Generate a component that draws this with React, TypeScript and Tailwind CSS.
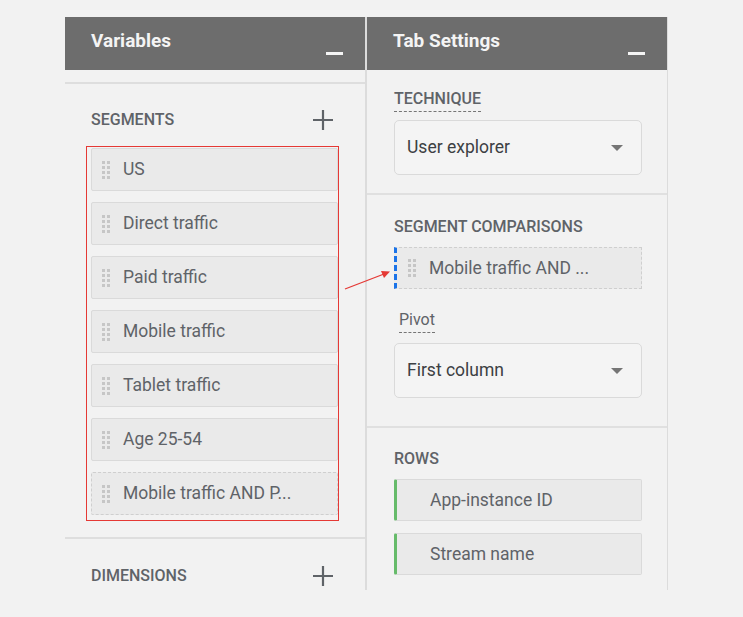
const FONT = { fontFamily: 'Roboto, "Noto Sans", Arial, sans-serif' }

const SEGMENTS = [
  'US',
  'Direct traffic',
  'Paid traffic',
  'Mobile traffic',
  'Tablet traffic',
  'Age 25-54',
]

function DragHandle() {
  return (
    <div className="grid grid-cols-2 gap-x-[2px] gap-y-[2px] w-[8px] shrink-0">
      {Array.from({ length: 8 }).map((_, i) => (
        <span key={i} className="block w-[3px] h-[3px] bg-[#c6c6c6]" />
      ))}
    </div>
  )
}

function PlusIcon() {
  return (
    <svg width="20" height="20" viewBox="0 0 20 20" className="shrink-0">
      <path d="M10 0v20M0 10h20" stroke="#5f6368" strokeWidth="2.2" fill="none" />
    </svg>
  )
}

function PanelHeader({ title }: { title: string }) {
  return (
    <div className="h-[53px] bg-[#6d6d6d] flex items-start justify-between pl-[26px] pr-[22px]">
      <span className="text-[19px] font-bold leading-[24px] text-[#f4f4f4] mt-[12px]">{title}</span>
      <span className="block w-[17px] h-[3px] bg-[#f4f4f4] mt-[35px]" />
    </div>
  )
}

function SectionRow({ label }: { label: string }) {
  return (
    <div className="h-[36px] flex items-center justify-between pl-[26px] pr-[32px]">
      <span className="text-[16px] font-medium text-[#5f6368] uppercase">{label}</span>
      <PlusIcon />
    </div>
  )
}

function Select({ value }: { value: string }) {
  return (
    <div className="h-[55px] w-[248px] rounded-[5px] border border-[#dadada] bg-[#f4f4f4] flex items-center justify-between pl-[12px] pr-[18px]">
      <span className="text-[17.5px] text-[#3c4043]">{value}</span>
      <span className="block w-0 h-0 border-l-[6px] border-r-[6px] border-t-[6px] border-l-transparent border-r-transparent border-t-[#757575]" />
    </div>
  )
}

function Label({ text, upper }: { text: string; upper?: boolean }) {
  return (
    <div className="flex">
      <span
        className={`block leading-[18px] pb-[3px] border-b border-dashed border-[#757575] text-[16px] text-[#5f6368] ${
          upper ? 'uppercase font-medium' : ''
        }`}
      >
        {text}
      </span>
    </div>
  )
}

export default function App() {
  return (
    <div className="relative w-[743px] h-[617px] bg-[#f2f2f2] overflow-hidden" style={FONT}>
      <div className="flex pl-[65px] pt-[17px]">
        {/* Variables panel */}
        <div className="w-[302px] h-[573px] border-r-2 border-[#dcdcdc] overflow-hidden">
          <PanelHeader title="Variables" />
          <div className="h-[12px]" />
          <div className="border-t-2 border-[#dedede]" />
          <div className="mt-[18px]">
            <SectionRow label="Segments" />
          </div>
          <div className="relative mt-[10px] pl-[26px]">
            <div className="absolute left-[21px] top-[-2px] w-[253px] h-[375px] border-[1.5px] border-[#e53935] pointer-events-none" />
            <div className="flex flex-col gap-[11px]">
              {SEGMENTS.map((s) => (
                <div
                  key={s}
                  className="h-[43px] w-[247px] bg-[#eaeaea] border border-[#dadada] rounded-[2px] flex items-center pl-[10px] gap-[13px]"
                >
                  <DragHandle />
                  <span className="text-[17.5px] text-[#5f6368]">{s}</span>
                </div>
              ))}
              <div className="h-[43px] w-[247px] bg-[#eaeaea] border border-dashed border-[#cfcfcf] rounded-[2px] flex items-center pl-[10px] gap-[13px]">
                <DragHandle />
                <span className="text-[17.5px] text-[#5f6368]">Mobile traffic AND P...</span>
              </div>
            </div>
          </div>
          <div className="mt-[22px] border-t-2 border-[#dedede]" />
          <div className="mt-[19px]">
            <SectionRow label="Dimensions" />
          </div>
        </div>

        {/* Tab Settings panel */}
        <div className="w-[301px] h-[573px] border-r border-[#dcdcdc] overflow-hidden">
          <PanelHeader title="Tab Settings" />
          <div className="pl-[27px] pt-[20px]">
            <Label text="Technique" upper />
            <div className="mt-[8px]">
              <Select value="User explorer" />
            </div>
          </div>
          <div className="mt-[18px] border-t-2 border-[#e0e0e0]" />
          <div className="pl-[27px] pt-[23px]">
            <div className="leading-[18px] text-[16px] font-medium text-[#5f6368] uppercase">Segment comparisons</div>
            <div className="mt-[11px] h-[42px] w-[248px] bg-[#eaeaea] border border-dashed border-[#cfcfcf] border-l-[3px] border-l-[#1a73e8] flex items-center pl-[11px] gap-[13px]">
              <DragHandle />
              <span className="text-[17.5px] text-[#5f6368]">Mobile traffic AND ...</span>
            </div>
            <div className="mt-[22px] pl-[5px]">
              <Label text="Pivot" />
            </div>
            <div className="mt-[10px]">
              <Select value="First column" />
            </div>
          </div>
          <div className="mt-[28px] border-t-2 border-[#e0e0e0]" />
          <div className="pl-[27px] pt-[22px]">
            <div className="leading-[18px] text-[16px] font-medium text-[#5f6368] uppercase">Rows</div>
            <div className="mt-[11px] flex flex-col gap-[12px]">
              {['App-instance ID', 'Stream name'].map((r) => (
                <div
                  key={r}
                  className="h-[42px] w-[248px] bg-[#eaeaea] border border-[#dadada] border-l-[3px] border-l-[#66bb6a] rounded-[2px] flex items-center pl-[33px]"
                >
                  <span className="text-[17.5px] text-[#5f6368]">{r}</span>
                </div>
              ))}
            </div>
          </div>
        </div>
      </div>

      {/* annotation arrow */}
      <svg className="absolute left-0 top-0 pointer-events-none" width="743" height="617">
        <line x1="345" y1="289" x2="384" y2="274" stroke="#e53935" strokeWidth="1.3" />
        <polygon points="390,271.5 381,271 384,278" fill="#e53935" />
      </svg>
    </div>
  )
}
